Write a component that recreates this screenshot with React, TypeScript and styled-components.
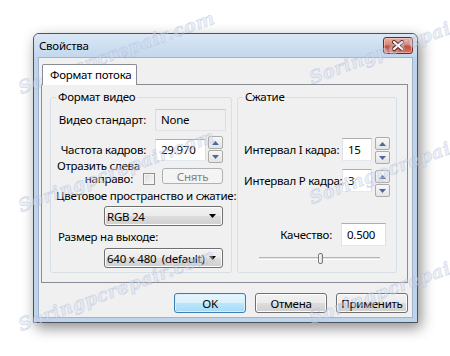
import React from "react";
import styled, { createGlobalStyle } from "styled-components";

const GlobalStyle = createGlobalStyle`
  html, body {
    margin: 0;
    padding: 0;
    background: #fff;
    overflow: hidden;
  }
  body {
    font-family: "Noto Sans", "Segoe UI", sans-serif;
    font-size: 11.5px;
    letter-spacing: -0.25px;
    color: #000;
  }
`;

const Page = styled.div`
  position: relative;
  width: 450px;
  height: 356px;
  padding: 33px 0 0 33px;
  box-sizing: border-box;
`;

const Window = styled.div`
  width: 385px;
  height: 290px;
  box-sizing: border-box;
  border: 1px solid #4b5360;
  border-radius: 6px 6px 0 0;
  background: #bfd4ea;
  padding: 0 4px 4px;
  display: flex;
  flex-direction: column;
  box-shadow: 3px 5px 14px rgba(0, 0, 0, 0.45);
`;

const TitleBar = styled.div`
  height: 23px;
  margin: 0 -4px;
  padding: 0 4px 0 5px;
  display: flex;
  align-items: center;
  justify-content: space-between;
  border-radius: 5px 5px 0 0;
  background: linear-gradient(#dae7f5, #c3d7ed);
`;

const Title = styled.span`
  line-height: 16px;
`;

const CloseButton = styled.div`
  width: 30px;
  height: 17px;
  box-sizing: border-box;
  border: 1px solid #6f2a22;
  border-radius: 3px;
  display: flex;
  align-items: center;
  justify-content: center;
  background: linear-gradient(#eab0a5 0%, #d98572 45%, #c4503c 55%, #d77561 100%);
  box-shadow: inset 0 0 0 1px rgba(255, 220, 210, 0.5);
`;

const Client = styled.div`
  flex: 1;
  box-sizing: border-box;
  background: #f0f0f0;
  border: 1px solid #9fb4cc;
  padding: 6px 4px 4px 2px;
  display: flex;
  flex-direction: column;
`;

const TabStrip = styled.div`
  display: flex;
  height: 20px;
  padding-left: 1px;
`;

const Tab = styled.div`
  position: relative;
  z-index: 1;
  width: 95px;
  height: 21px;
  box-sizing: border-box;
  border: 1px solid #898c95;
  border-bottom: none;
  border-radius: 2px 2px 0 0;
  background: #fff;
  padding-left: 7px;
  line-height: 19px;
  white-space: nowrap;
`;

const TabPanel = styled.div`
  height: 199px;
  box-sizing: border-box;
  border: 1px solid #898c95;
  padding: 4px 9px 9px 8px;
  display: flex;
  gap: 5px;
`;

const Group = styled.fieldset<{ $w: number }>`
  width: ${({ $w }) => $w}px;
  box-sizing: border-box;
  margin: 0;
  padding: 0 5px 0 6px;
  border: 1px solid #d5dfe5;
  border-radius: 3px;
  display: flex;
  flex-direction: column;
  min-width: 0;
`;

const Legend = styled.legend`
  padding: 0 2px;
  margin-left: -1px;
  line-height: 16px;
`;

const Row = styled.div<{ $top: number; $h?: number; $align?: string; $justify?: string }>`
  display: flex;
  margin-top: ${({ $top }) => $top}px;
  height: ${({ $h }) => ($h ? `${$h}px` : "auto")};
  align-items: ${({ $align }) => $align || "center"};
  justify-content: ${({ $justify }) => $justify || "flex-start"};
`;

const Label = styled.div<{ $w?: number; $top?: number; $lh?: number }>`
  width: ${({ $w }) => ($w ? `${$w}px` : "auto")};
  flex-shrink: 0;
  text-align: right;
  white-space: nowrap;
  margin-top: ${({ $top }) => $top || 0}px;
  line-height: ${({ $lh }) => $lh || 16}px;
`;

const Caption = styled.div<{ $top: number; $left: number }>`
  margin-top: ${({ $top }) => $top}px;
  margin-left: ${({ $left }) => $left}px;
  line-height: 16px;
  white-space: nowrap;
`;

const MirrorLabel = styled.div`
  width: 82px;
  flex-shrink: 0;
  text-align: right;
  line-height: 12.5px;
  white-space: nowrap;
  span {
    display: block;
  }
  span + span {
    padding-right: 6px;
  }
`;

const TextBox = styled.div<{ $w: number; $h: number; $left?: number; $top?: number; $readOnly?: boolean }>`
  width: ${({ $w }) => $w}px;
  height: ${({ $h }) => $h}px;
  margin-left: ${({ $left }) => $left || 0}px;
  margin-top: ${({ $top }) => $top || 0}px;
  flex-shrink: 0;
  box-sizing: border-box;
  padding-left: 5px;
  line-height: ${({ $h }) => $h - 2}px;
  border: 1px solid;
  border-color: #abadb3 #dbdfe6 #e3e9ef #e2e3ea;
  background: ${({ $readOnly }) => ($readOnly ? "#f0f0f0" : "#fff")};
  ${({ $readOnly }) => ($readOnly ? "border-color: #c9cbd0 #dcdee2 #e1e3e6 #dcdee2;" : "")}
`;

const Spinner = styled.div<{ $left: number; $top?: number }>`
  width: 15px;
  height: 27px;
  margin-left: ${({ $left }) => $left}px;
  margin-top: ${({ $top }) => $top || 0}px;
  flex-shrink: 0;
  display: flex;
  flex-direction: column;
  gap: 1px;
`;

const SpinButton = styled.div`
  flex: 1;
  box-sizing: border-box;
  border: 1px solid #acacac;
  border-radius: 2px;
  background: linear-gradient(#f7f7f7, #e4e4e4);
  display: flex;
  align-items: center;
  justify-content: center;
`;

const CheckBox = styled.div`
  width: 12px;
  height: 12px;
  margin: 13px 0 0 4px;
  box-sizing: border-box;
  border: 1px solid #8f8f8f;
  background: linear-gradient(135deg, #dcdcdc, #fafafa);
  box-shadow: inset 0 0 0 1px #f4f4f4;
  flex-shrink: 0;
`;

const Button = styled.div<{ $w?: number; $h?: number; $primary?: boolean; $disabled?: boolean }>`
  width: ${({ $w }) => $w || 72}px;
  height: ${({ $h }) => $h || 20}px;
  box-sizing: border-box;
  border: 1px solid #707070;
  border-radius: 3px;
  display: flex;
  align-items: center;
  justify-content: center;
  flex-shrink: 0;
  background: linear-gradient(#f2f2f2 0%, #ebebeb 49%, #dddddd 50%, #cfcfcf 100%);
  box-shadow: inset 0 0 0 1px #fcfcfc;
  ${({ $primary }) =>
    $primary &&
    `
    border-color: #3c7fb1;
    background: linear-gradient(#eaf6fd 0%, #d9f0fc 49%, #bee6fd 50%, #a7d9f5 100%);
    box-shadow: inset 0 0 0 1px #d6effc;
  `}
  ${({ $disabled }) =>
    $disabled &&
    `
    border-color: #adb2b5;
    background: #f4f4f4;
    color: #838383;
    box-shadow: none;
  `}
`;

const DisabledButton = styled(Button)`
  margin: 8px 0 0 7px;
`;

const Select = styled.div<{ $top: number }>`
  width: 119px;
  height: 20px;
  margin: ${({ $top }) => $top}px 0 0 47px;
  box-sizing: border-box;
  border: 1px solid #707070;
  border-radius: 3px;
  padding: 0 6px 0 2px;
  display: flex;
  align-items: center;
  justify-content: space-between;
  white-space: pre;
  background: linear-gradient(#f2f2f2 0%, #ebebeb 49%, #dddddd 50%, #cfcfcf 100%);
  box-shadow: inset 0 0 0 1px #fcfcfc;
`;

const Slider = styled.div`
  position: relative;
  width: 121px;
  height: 11px;
  margin: 7px 0 0 15px;
  display: flex;
  align-items: center;
`;

const Track = styled.div`
  width: 100%;
  height: 3px;
  box-sizing: border-box;
  border-top: 1px solid #b4b4b4;
  border-bottom: 1px solid #fff;
  background: #e6e6e6;
`;

const Thumb = styled.div`
  position: absolute;
  top: 0;
  width: 5px;
  height: 11px;
  margin-left: -2px;
  box-sizing: border-box;
  border: 1px solid #7a7a7a;
  border-radius: 2px;
  background: linear-gradient(90deg, #fafafa, #dcdcdc);
`;

const ButtonBar = styled.div`
  display: flex;
  justify-content: flex-end;
  gap: 9px;
  margin-top: 10px;
`;

const Marks = styled.div`
  position: absolute;
  inset: 0;
  overflow: hidden;
  pointer-events: none;
`;

const Mark = styled.span`
  position: absolute;
  font-family: "DejaVu Serif", serif;
  font-weight: bold;
  font-style: italic;
  font-size: 18px;
  line-height: 18px;
  letter-spacing: 0.5px;
  white-space: nowrap;
  color: rgba(214, 222, 240, 0.45);
  -webkit-text-stroke: 0.7px rgba(150, 168, 205, 0.35);
  transform: rotate(-20deg);
  transform-origin: 0 100%;
`;

const Arrow = ({ up, color }: { up?: boolean; color: string }) => (
  <svg width="7" height="4" viewBox="0 0 7 4">
    <path d={up ? "M0 4 L3.5 0 L7 4 Z" : "M0 0 L7 0 L3.5 4 Z"} fill={color} />
  </svg>
);

const Spin = ({ left, top }: { left: number; top?: number }) => (
  <Spinner $left={left} $top={top}>
    <SpinButton>
      <Arrow up color="#4a6a9c" />
    </SpinButton>
    <SpinButton>
      <Arrow color="#4a6a9c" />
    </SpinButton>
  </Spinner>
);

const marks = [
  { x: 22, y: 97 },
  { x: 22, y: 215 },
  { x: 22, y: 334 },
  { x: 313, y: 87 },
  { x: 313, y: 207 },
  { x: 313, y: 327 },
];

export default function App() {
  const quality = 0.5;

  return (
    <Page>
      <GlobalStyle />
      <Window>
        <TitleBar>
          <Title>Свойства</Title>
          <CloseButton>
            <svg width="14" height="11" viewBox="0 0 14 11">
              <path d="M3 2 L11 9 M11 2 L3 9" stroke="#5a2420" strokeWidth="4" strokeLinecap="round" />
              <path d="M3 2 L11 9 M11 2 L3 9" stroke="#fff" strokeWidth="2.2" strokeLinecap="round" />
            </svg>
          </CloseButton>
        </TitleBar>
        <Client>
          <TabStrip>
            <Tab>Формат потока</Tab>
          </TabStrip>
          <TabPanel>
            <Group $w={182}>
              <Legend>Формат видео</Legend>
              <Row $top={4} $h={22}>
                <Label $w={89}>Видео стандарт:</Label>
                <TextBox $w={71} $h={22} $left={9} $readOnly>
                  None
                </TextBox>
              </Row>
              <Row $top={5} $h={27}>
                <Label $w={89}>Частота кадров:</Label>
                <TextBox $w={51} $h={22} $left={9}>
                  29.970
                </TextBox>
                <Spin left={2} />
              </Row>
              <Row $top={-3} $h={25} $align="flex-start">
                <MirrorLabel>
                  <span>Отразить слева</span>
                  <span>направо:</span>
                </MirrorLabel>
                <CheckBox />
                <DisabledButton $w={61} $h={16} $disabled>
                  Снять
                </DisabledButton>
              </Row>
              <Caption $top={3} $left={-1}>
                Цветовое пространство и сжатие:
              </Caption>
              <Select $top={2}>
                <span>RGB 24</span>
                <Arrow color="#000" />
              </Select>
              <Caption $top={3} $left={1}>
                Размер на выходе:
              </Caption>
              <Select $top={3}>
                <span>640 x 480  (default)</span>
                <Arrow color="#000" />
              </Select>
            </Group>
            <Group $w={160}>
              <Legend>Сжатие</Legend>
              <Row $top={32} $align="flex-start">
                <Label $w={93} $top={1} $lh={23}>
                  Интервал I кадра:
                </Label>
                <TextBox $w={30} $h={23} $left={5} $top={1}>
                  15
                </TextBox>
                <Spin left={3} />
              </Row>
              <Row $top={5} $align="flex-start">
                <Label $w={93} $lh={23}>
                  Интервал P кадра:
                </Label>
                <TextBox $w={30} $h={23} $left={5}>
                  3
                </TextBox>
                <Spin left={3} top={1} />
              </Row>
              <Row $top={26} $justify="flex-end">
                <Label $lh={23}>Качество:</Label>
                <TextBox $w={45} $h={23} $left={9}>
                  0.500
                </TextBox>
                <div style={{ width: 5 }} />
              </Row>
              <Slider>
                <Track />
                <Thumb style={{ left: `${quality * 100}%` }} />
              </Slider>
            </Group>
          </TabPanel>
          <ButtonBar>
            <Button $primary>OK</Button>
            <Button>Отмена</Button>
            <Button>Применить</Button>
          </ButtonBar>
        </Client>
      </Window>
      <Marks>
        {marks.map((m, i) => (
          <Mark key={i} style={{ left: m.x, top: m.y - 18 }}>
            Soringpcrepair.com
          </Mark>
        ))}
      </Marks>
    </Page>
  );
}
